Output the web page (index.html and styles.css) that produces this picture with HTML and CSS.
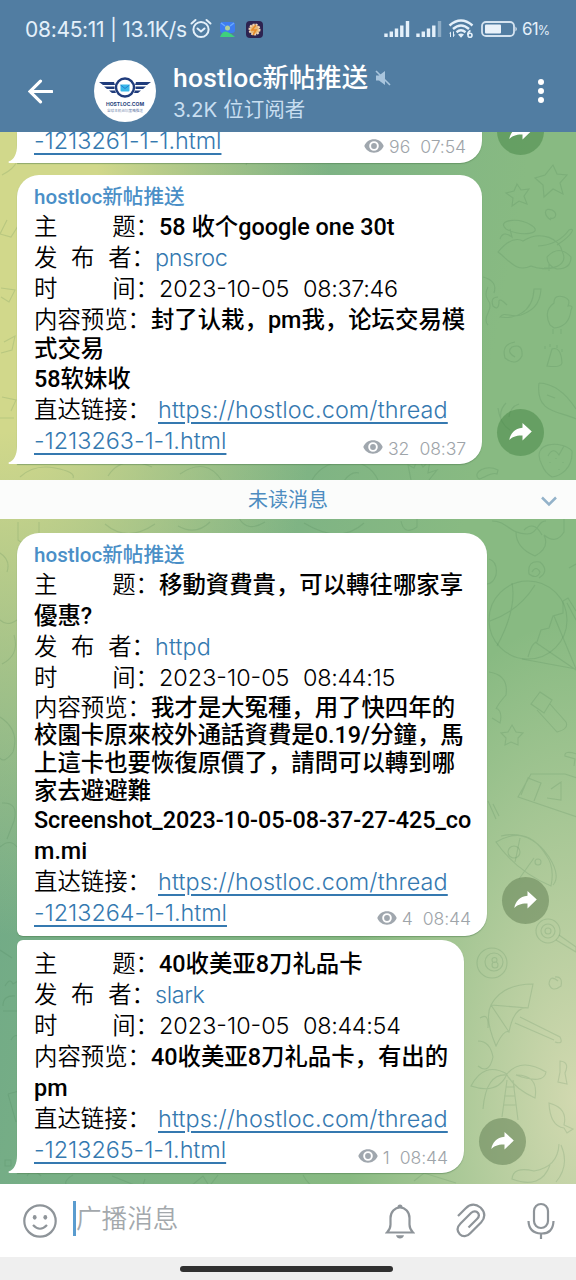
FILE: index.html
```html
<!DOCTYPE html>
<html lang="zh-CN">
<head>
<meta charset="utf-8">
<title>hostloc新帖推送</title>
<link rel="stylesheet" href="styles.css">
</head>
<body>
<svg class="defs" width="0" height="0" aria-hidden="true">
  <symbol id="eye" viewBox="0 0 20 14"><path fill-rule="evenodd" d="M10 .3C5.600.3 1.900 3 .3 7c1.600 4 5.300 6.700 9.700 6.700S18.100 11 19.700 7C18.100 3 14.400.3 10 .3zM10 2.200a4.800 4.800 0 1 1 0 9.600 4.800 4.800 0 0 1 0-9.600z"/><circle cx="10" cy="7" r="2.900"/></symbol>
  <symbol id="forward" viewBox="0 0 47 47"><path d="M25.500 14 34.800 22.600 25.500 31.500V26.500C19 26.300 15.500 27.800 12.300 31 13.500 24.500 17.500 19.600 25.500 18.800Z"/></symbol>
  <symbol id="tail" viewBox="0 0 10 20"><path d="M9 0V2C9 11 6 17 .6 18.500Q0 20 2 20H10V0Z"/></symbol>
</svg>
<div class="phone">
  <header class="top">
    <div class="status">
      <span class="clock">08:45:11 | 13.1K/s</span>
      <svg class="alarm" viewBox="0 0 22 22"><circle cx="11" cy="11.500" r="7.600"/><path d="M7.500 10.500 11 13.500 14.500 10.500M1.500 5.500 5.500 2M20.500 5.500 16.500 2"/></svg>
      <svg class="app-a" viewBox="0 0 17 17"><rect x="1" y="1" width="15" height="11" rx="3" fill="#3e7df0"/><path d="M1 16q3-7 7.500-5T16 16z" fill="#3fd07c"/><circle cx="8.500" cy="7" r="2.500" fill="#b2cf9a"/><path d="M2 2l4 3M15 2l-4 3" stroke="#69a9ff" stroke-width="1.500"/></svg>
      <svg class="app-b" viewBox="0 0 17 17"><rect width="17" height="17" rx="4" fill="#2d2350"/><circle cx="8.500" cy="8.500" r="5" fill="#e5b877" stroke="#f0d6ba" stroke-width="2" stroke-dasharray="2 1"/><path d="M10 4 6 9h4l-3 5" stroke="#e98b28" stroke-width="1.500" fill="none"/></svg>
      <span class="grow"></span>
      <svg class="signals" viewBox="0 0 58 18"><path d="M2 13.500V17M7.300 11.500V17M12.500 8.500V17M17.800 5.500V17M23.500 1V17M34 13.500V17M39.300 11.500V17M44.500 8.500V17M49.800 5.500V17"/><path opacity=".4" d="M55.500 1V17"/></svg>
      <svg class="wifi" viewBox="0 0 26 20"><path d="M1.500 6.500Q13-3.500 24.500 6.500M5 10Q13 3 21 10M8.500 13.200Q13 9.500 17.500 13.200"/><path class="solid" d="M10 15.500Q13 13.500 16 15.500L13 18.700ZM1 14.500 3 12.500V18H2V14.500ZM5 12.500H6V16L7.500 14.800 5.500 18H5Z"/><path class="six" d="M22.500 11.500Q19.500 13 19.800 15.800M22 18.200a2 2 0 1 0 0-4 2 2 0 0 0 0 4z"/></svg>
      <svg class="battery" viewBox="0 0 37 16"><rect x="1" y="1" width="32" height="14" rx="4"/><rect class="charge" x="4" y="3.500" width="16" height="9" rx="1"/><path class="charge" d="M34.500 5.500Q37 8 34.500 10.500Z"/></svg>
      <span class="level">61<small>%</small></span>
    </div>
    <div class="titlebar">
      <svg class="back" viewBox="0 0 24 24"><path d="M23 12H2M12 2 2 12 12 22"/></svg>
      <div class="avatar">
        <svg class="wings" viewBox="0 0 52 22"><path d="M0 5H15L16 8H4ZM5 9.500H15.500V12H8ZM10 13.500H16L17 16H13ZM52 5H37L36 8H48ZM47 9.500H36.500V12H44ZM42 13.500H36L35 16H39Z"/><circle cx="26" cy="10.500" r="9"/><rect x="21.500" y="7.500" width="9" height="7" rx="1" fill="#39b9ea"/><path d="M21.500 8 26 11.500 30.500 8" fill="none" stroke="#237fce"/></svg>
        <b>HOSTLOC.COM</b><i>全球主机论坛策略推送</i>
      </div>
      <div class="names">
        <h1><span class="latin">hostloc</span>新帖推送<svg class="muted" viewBox="0 0 16 16"><path d="M1 5.500H4L10 1V15L4 10.500H1Z"/><path class="slash" d="M1 1 15 15"/></svg></h1>
        <p>3.2K 位订阅者</p>
      </div>
      <span class="dots"><i></i><i></i><i></i></span>
    </div>
  </header>

  <main class="chat">
    <svg class="wallpaper" viewBox="0 132 576 1052" aria-hidden="true">
      <g>
        <path d="M553 165l4 9 10 1-7 8 3 11-10-5-9 8-1-12-8-7 10-3zM517 184l4 6 8-1-5 7 3 8-8-3-7 5 1-8-7-5 8-2z"/>
        <path d="M551 220c-8-5-7-13 1-10 6 3 4 10-2 8M506 229c-10-9 12-12 25-4 14 9-10 12-25 4zM500 239q3-9 12-2l-2-8M498 252q14-17 25-11c19-12 37-1 39 10 9 17-17 21-31 15-15 7-22-6-33-14zM538 246q20-1 31-16c6-3 5 4-12 15M547 257q12-13 24 0 0 12-14 12-10-3-10-12zM549 264v7m-5-3h10"/>
        <path d="M500 317c13 2 33-3 34-28h7c-1 17-10 22-20 26-11 3-16-4-21 2zM483 277q15 4 11 16M488 287q-4 8 0 13t0 13 0 12M507 305q-9-9-8-2-1 8-6 3-3-9 5-9M550 325q-7-14 4-22 0-9 10-6 7 2 4 9 6-1 3 4-2 17-17 18zM553 329v5m8-5v5"/>
        <path d="M515 357q-9-5-3-10 11-4 10 9-6 11-17 2-4-14 10-16M547 366l5-17q9-3 10 14-1 5-15 3zM545 346v3m5-5v3m7-2v3m5 1v3M539 383c-4 32 23 28 37 36M539 383q21 1 37 26M547 395l8 3"/>
        <path d="M542 465c-13-24 21-25 30-14 1 18-12 25-20 26q-7-4-10-12zM548 456q5-10 11-1l5-9M550 462v1m6-5v1m7 3v1m-4 6v1M510 430q-10-6-12-22M509 417q1-10 10-13M501 420q-2-10 5-17M498 470c-12-6-25 2-20 8 1 4 13-7 19-4zM411 480l-3-15 6 3 4-10 5 9 7-7-2 13 9-3-8 10M312 480c15-26 55-25 66 0M344 481q7-10 15-8"/>
        <path d="M7 220l-7 14 11 3 7-11M1 288l14 2-6 12-8-5M4 342l11-6-3 14-11 3M2 397l14 3-5 11M0 418h14M2 175q12-6 15-14M35 157q14 9 21 0M205 161q7-15 24-14 25 3 17 18M259 152q13-9 16 8M330 162q-10-14-18-5M20 477q14-13 35-9t18 10M108 476q14-22 44-9M180 474q26-18 42 7"/>
        <path d="M18 522v18q8 7 21 3V522M105 524q22 19 50 0M178 526q18 10 32-4M239 518q8 15 26 4M304 523q36 22 60 0M401 521q3 15 16 6V518M492 521c16 0 17 13 35 13 11 0 11-14 19-13M516 532q0 16 19 24 15-8 9-21 12 10 20-3V517M524 530q10-10 18 5"/>
        <circle cx="528" cy="620" r="39"/><path d="M490 621q29-10 45-36M497 646q20-37 15-63M528 657q4-15 9-15l4-12 8-2 4-12 10-3 0-12 5-3 8 13M522 659l54 10M535 642l41 28M554 616l22 53M567 603l9 17"/>
        <path d="M532 572q4-7 8 0-3 8-11 2-2-14 11-12 10 9-1 16M569 568l7-4M489 559q9 3 7 16-3 9-9 9M489 672q20 3 17 23-8 9-10 14M492 718l8 5q3-12-4-15"/>
        <path d="M531 704l9-12 12 8-8 13zM537 710l20 22q12-3 9-10l-16-18M512 725l4 7 7 1-5 5 0 7-7-3-6 3 1-7-5-5 7-1zM577 754q-13-4-12 2l10 3-1 7M531 774h34l24 8-12 35-59-20zM521 795l7-17 13 5-7 18M551 789l10-7v18l-14-2M488 801l8 18M493 804l6 12"/>
        <path d="M496 842q31-18 50 13 9 12 5 31-35-15-55-44zM501 836q29-7 48 21 12 19 4 28M515 862l5-24M519 879l15-21"/><circle cx="514" cy="852" r="6"/><circle cx="538" cy="862" r="3"/>
        <circle cx="548" cy="931" r="12"/><circle cx="548" cy="931" r="7"/><circle cx="548" cy="931" r="3"/><path d="M556 940l20 12v-5l-17-12"/><circle cx="492" cy="963" r="15"/><circle cx="494" cy="962" r="9"/><path d="M497 960a2.500 2.500 0 1 0-5 0 2.500 2.500 0 0 0 5 0zM498 965a3 3 0 1 0-6 0 3 3 0 0 0 6 0z"/>
        <path d="M491 1005q11-21 42-21l-5 24q-14-2-19 24-5-3-13 14-12-28-5-41zM491 1005l37 3M491 1005l18 27M520 1017l40 20q4 8-5 5M515 1023l39 17M558 981q-8-7-9 3 3 9 12 2 2-10-6-9"/>
        <path d="M507 1074q-23-13-36 12 27 9 36-12 14-17 39-2-2 13-30 3 23 0 19 23-20-9-28-23-21-2-24 34M507 1080l-5 37M513 1080l5 40M506 1087h9M504 1096h11M503 1105h13M560 1061q10 1 5 12l2 11-9-2 2-10zM549 1103q19 5 15 22l9 4-6 4-3-5q-14-2-15-25z"/>
        <path d="M561 1145q9 20-5 37M550 1165q-9 25-38 14 1-13 22-8 24-4 25-27M478 1041q12 0 15 16-4 18-15 9M480 1018q9-6 8 10"/>
        <path d="M0 553q11 7 7 19M2 664q18-9 12-29M0 620q7 7 17 0M0 717q20 13 13 35-9 12-13 6M2 803q17-1 12 18l-7 18M0 847q10-9 17 0M0 950l12 8M5 986q5-9 8-2l5-3M3 1006q0-11 12-10M3 1011h15M11 1040q7-12 14 8M8 1094l11-3M8 1094l8 28M5 1160h6v6H5zM27 1176q5-9 14 0M73 1175q-13 8-3 12M112 1176l30 12 3-9M191 1186l12-10 5 8M218 1175l-10 13M303 1175q10 19 25 10M414 1181l10-8 32 10"/>
      </g>
    </svg>

    <section class="row r0"><div class="bubble cut"><svg class="tail"><use href="#tail"/></svg>
      <div class="ln end"><a class="id">-1213261-1-1.html</a><span class="meta"><svg><use href="#eye"/></svg><span>96</span><time>07:54</time></span></div></div>
      <svg class="share"><use href="#forward"/></svg></section>

    <section class="row r1"><div class="bubble"><svg class="tail"><use href="#tail"/></svg>
      <div class="author">hostloc新帖推送</div>
      <div class="ln"><span class="key wide"><span>主</span><span>题：</span></span><b>58 收个google one 30t</b></div>
      <div class="ln"><span class="key three"><span>发</span><span>布</span><span>者：</span></span><a class="user">pnsroc</a></div>
      <div class="ln"><span class="key wide"><span>时</span><span>间：</span></span><span class="date">2023-10-05</span><span class="time">08:37:46</span></div>
      <div class="ln"><span>内容预览：</span><b>封了认栽，pm我，论坛交易模</b></div>
      <div class="ln cjk single"><b>式交易</b></div>
      <div class="ln"><b>58软妹收</b></div>
      <div class="ln"><span class="key link">直达链接：</span><a class="url">https://hostloc.com/thread</a></div>
      <div class="ln end"><a class="id">-1213263-1-1.html</a><span class="meta"><svg><use href="#eye"/></svg><span>32</span><time>08:37</time></span></div></div>
      <svg class="share"><use href="#forward"/></svg></section>

    <div class="unread"><span>未读消息</span><svg viewBox="0 0 18 12"><path d="M2 2.500 9 9.500 16 2.500"/></svg></div>

    <section class="row r2"><div class="bubble">
      <div class="author">hostloc新帖推送</div>
      <div class="ln"><span class="key wide"><span>主</span><span>题：</span></span><b>移動資費貴，可以轉往哪家享</b></div>
      <div class="ln"><b>優惠?</b></div>
      <div class="ln"><span class="key three"><span>发</span><span>布</span><span>者：</span></span><a class="url">httpd</a></div>
      <div class="ln"><span class="key wide"><span>时</span><span>间：</span></span><span class="date">2023-10-05</span><span class="time">08:44:15</span></div>
      <div class="ln cjk lead"><span>内容预览：</span><b>我才是大冤種，用了快四年的</b></div>
      <div class="ln cjk"><b>校園卡原來校外通話資費是0.19/分鐘，馬</b></div>
      <div class="ln cjk"><b>上這卡也要恢復原價了，請問可以轉到哪</b></div>
      <div class="ln cjk"><b>家去避避難</b></div>
      <div class="ln"><b class="file">Screenshot_2023-10-05-08-37-27-425_co</b></div>
      <div class="ln"><b>m.mi</b></div>
      <div class="ln"><span class="key link">直达链接：</span><a class="url">https://hostloc.com/thread</a></div>
      <div class="ln end"><a class="id">-1213264-1-1.html</a><span class="meta"><svg><use href="#eye"/></svg><span>4</span><time>08:44</time></span></div></div>
      <svg class="share"><use href="#forward"/></svg></section>

    <section class="row r3"><div class="bubble"><svg class="tail"><use href="#tail"/></svg>
      <div class="ln"><span class="key wide"><span>主</span><span>题：</span></span><b>40收美亚8刀礼品卡</b></div>
      <div class="ln"><span class="key three"><span>发</span><span>布</span><span>者：</span></span><a class="user">slark</a></div>
      <div class="ln"><span class="key wide"><span>时</span><span>间：</span></span><span class="date">2023-10-05</span><span class="time">08:44:54</span></div>
      <div class="ln"><span>内容预览：</span><b>40收美亚8刀礼品卡，有出的</b></div>
      <div class="ln"><b>pm</b></div>
      <div class="ln"><span class="key link">直达链接：</span><a class="url">https://hostloc.com/thread</a></div>
      <div class="ln end"><a class="id">-1213265-1-1.html</a><span class="meta"><svg><use href="#eye"/></svg><span>1</span><time>08:44</time></span></div></div>
      <svg class="share"><use href="#forward"/></svg></section>
  </main>

  <footer class="composer">
    <svg class="smile" viewBox="0 0 36 36"><circle cx="18" cy="18" r="15.700"/><path d="M11 22q7 7.500 14 0"/><ellipse cx="12.700" cy="14.300" rx="1.900" ry="2.400"/><ellipse cx="23.300" cy="14.300" rx="1.900" ry="2.400"/></svg>
    <span class="caret"></span><span class="hint">广播消息</span><span class="grow"></span>
    <svg class="bell" viewBox="0 0 30 36"><path d="M2 29.500Q5.500 26 5.500 21.500V15A9.500 10.500 0 0 1 24.500 15V21.500Q24.500 26 28 29.500Z"/><path class="fill" d="M12.500 5V4a2.500 2.500 0 0 1 5 0V5ZM11 32.200H19Q18 35.500 15 35.500T11 32.200Z"/></svg>
    <svg class="clip" viewBox="0 0 32 38"><path d="M3 14 10.500 6.500C15.500 1.500 21 2 25.500 5.500 30.500 10.500 30 16 26 20.500L15.500 31C12 35 7.500 35 4.800 32.200 1.800 29 2 25 5.500 21.500L16 11C18.500 8.800 21.500 9 23 11 24.500 13 24 15 22 17L13.500 25.500"/></svg>
    <svg class="mic" viewBox="0 0 30 38"><rect x="8" y="2" width="14" height="24" rx="7"/><path d="M2.500 19Q3 31 15 31.500T27.500 19M15 31.500V37"/></svg>
  </footer>
  <div class="nav"><i></i></div>
</div>
</body>
</html>
```

FILE: styles.css
```css
* { box-sizing: border-box; }
body { margin: 0; background: #fff; font-family: Inter, "Noto Sans CJK SC", sans-serif; }
h1, p { margin: 0; font-weight: 400; }
.defs { position: absolute; }
.phone { width: 576px; height: 1280px; display: flex; flex-direction: column; overflow: hidden; }
.grow { flex: 1; }

.top { height: 132px; background: #517da2; color: #fff; flex: none; }
.status { height: 58px; display: flex; align-items: center; padding: 0 28px 0 25px; }
.clock { width: 161px; font-size: 21px; letter-spacing: -.3px; color: #e4f0fa; white-space: pre; }
.alarm { width: 22px; height: 22px; margin-left: 4px; fill: none; stroke: #e4f0fa; stroke-width: 2; stroke-linecap: round; }
.app-a { width: 17px; height: 17px; margin-left: 7px; }
.app-b { width: 17px; height: 17px; margin-left: 10px; }
.signals { width: 58px; height: 18px; stroke: #e4f0fa; stroke-width: 3.4; }
.wifi { width: 26px; height: 20px; margin-left: 6px; fill: none; stroke: #e4f0fa; stroke-width: 2.4; }
.wifi .solid { fill: #e4f0fa; stroke: none; }
.wifi .six { stroke-width: 1.6; }
.battery { width: 37px; height: 16px; margin: 0 4px 0 7px; fill: none; stroke: #d4e3f0; stroke-width: 1.8; }
.battery .charge { fill: #e9f2fa; stroke: none; }
.level { width: 26px; font-size: 17px; letter-spacing: -.9px; color: #e4f0fa; }
.level small { font-size: 12.500px; }

.titlebar { height: 66px; display: flex; align-items: center; padding: 0 32px 0 28px; }
.back { width: 25px; height: 25px; fill: none; stroke: #fff; stroke-width: 3; stroke-linecap: round; }
.avatar { width: 62px; height: 62px; margin-left: 41px; border-radius: 50%; background: #fff; color: #27427c; display: flex; flex-direction: column; align-items: center; padding-top: 17px; }
.wings { width: 52px; height: 22px; fill: #203c7c; }
.wings circle { fill: #fff; stroke: #203c7c; stroke-width: 2.4; }
.avatar b { font: 700 5px/6px Inter, sans-serif; margin-top: 2px; }
.avatar i { font: normal 3.6px/5px "Noto Sans CJK SC", sans-serif; margin-top: 1px; color: #6d82aa; }
.names { margin-left: 17px; padding-top: 3px; flex: 1; }
h1 { font: 500 26.4px/34px Roboto, "Noto Sans CJK SC", sans-serif; display: flex; align-items: center; }
.latin { letter-spacing: .3px; }
.muted { width: 16px; height: 16px; margin-left: 7px; fill: #a9c5dd; }
.muted .slash { stroke: #a9c5dd; stroke-width: 1.6; }
.names p { font-size: 20.500px; line-height: 30px; color: #c8def0; white-space: pre; }
.dots { display: grid; gap: 3px; }
.dots i { width: 6px; height: 6px; border-radius: 50%; background: #fff; }

.chat { position: relative; height: 1052px; flex: none; overflow: hidden;
  background: radial-gradient(ellipse 230px 480px at 100% 92%, #d2d9b0, transparent),
    radial-gradient(ellipse 330px 720px at 0 8%, #d1d88b 30%, transparent),
    linear-gradient(100deg, #6ba688, #88ba82 70%); }
.wallpaper { position: absolute; inset: 0; width: 576px; height: 1052px; fill: none; stroke: #44744b; stroke-opacity: .17; stroke-width: 1.1; }
.row { position: relative; display: flex; align-items: flex-end; padding-left: 17px; }
.r0 { height: 31px; }
.r1 { margin-top: 12px; }
.r2 { margin-top: 14px; }
.r3 { margin-top: 4px; }
.bubble { position: relative; background: #fff; border-radius: 22px 22px 22px 0; padding: 7px 0 0 17px; box-shadow: 0 1px 1px #4b794c80; color: #000; font-size: 23.4px; }
.cut { width: 465px; height: 31px; border-radius: 0 0 22px 0; padding: 0 0 0 17px; }
.cut .ln { margin-top: -6px; }
.r1 .bubble { width: 465px; height: 289px; }
.r2 .bubble { width: 470px; height: 403px; border-radius: 22px 22px 22px 6px; }
.r3 .bubble { width: 447px; height: 233px; border-radius: 6px 22px 22px 0; padding-top: 9px; }
.tail { position: absolute; left: -9px; bottom: 0; width: 10px; height: 20px; fill: #fff; }
.author { font-size: 20.600px; line-height: 30px; height: 30px; color: #4a8fc7; white-space: nowrap; font-family: Roboto, "Noto Sans CJK SC", sans-serif; font-weight: 500; }
.ln { height: 31px; line-height: 30px; display: flex; white-space: nowrap; font-weight: 350; }
.cjk { height: 28px; line-height: 28px; }
.single { line-height: 26px; }
.lead { height: 27px; }
.ln b { font-family: Roboto, "Noto Sans CJK SC", sans-serif; font-weight: 500; }
.ln .file { letter-spacing: -.04px; }
.ln a { color: #3579b0; }
.key { display: flex; justify-content: space-between; flex: none; }
.wide { width: 125px; }
.three { width: 121px; }
.link { width: 124px; }
.date { width: 144px; }
.time { letter-spacing: -.3px; }
.user { letter-spacing: -.4px; }
.url { letter-spacing: .11px; }
.id { letter-spacing: -.03px; }
.link + .url, .id { text-decoration: underline; text-decoration-thickness: 1.500px; text-underline-offset: 4px; }
.end { justify-content: space-between; }
.meta { display: flex; align-items: center; font-size: 17.600px; color: #9ea4a9; padding: 14px 16px 0 0; height: 31px; }
.meta svg { width: 20px; height: 14px; margin: 0 5px 3px 0; fill: #a0a7ae; }
.meta time { margin-left: 10px; letter-spacing: -.1px; }
.cut .meta, .r2 .meta { padding-top: 11px; }
.share { width: 47px; height: 47px; margin: 0 0 8px 15px; flex: none; border-radius: 50%; background: #3c7d3c70; fill: #fff; }
.r2 .share { margin-bottom: 12px; background: #6482558c; }
.r3 .share { background: #6482558c; }
.unread { position: relative; height: 39px; margin-top: 16px; padding-bottom: 3px; background: #fbfcfb; display: flex; align-items: center; justify-content: center; color: #4d8cc0; font-size: 20px; }
.unread svg { position: absolute; right: 18px; top: 15px; width: 18px; height: 12px; fill: none; stroke: #93b2c9; stroke-width: 2.500; }

.composer { height: 73px; flex: none; background: #fff; display: flex; align-items: center; padding: 0 20px 0 22px; fill: none; stroke: #8e9499; stroke-width: 2.2; }
.smile { width: 36px; height: 36px; }
.smile ellipse { fill: #8e9499; stroke: none; }
.caret { width: 3px; height: 35px; background: #5a9ccf; margin: -4px 0 0 15px; }
.hint { color: #a3a8ac; font-size: 25.600px; font-weight: 350; margin-top: -8px; }
.bell { width: 30px; height: 36px; }
.bell .fill { fill: #8e9499; stroke: none; }
.clip { width: 32px; height: 38px; margin-left: 40px; }
.mic { width: 30px; height: 38px; margin-left: 39px; }
.nav { flex: 1; background: #efefef; display: flex; align-items: center; justify-content: center; padding-right: 4px; }
.nav i { width: 213px; height: 6px; border-radius: 3px; background: #303030; }
```
